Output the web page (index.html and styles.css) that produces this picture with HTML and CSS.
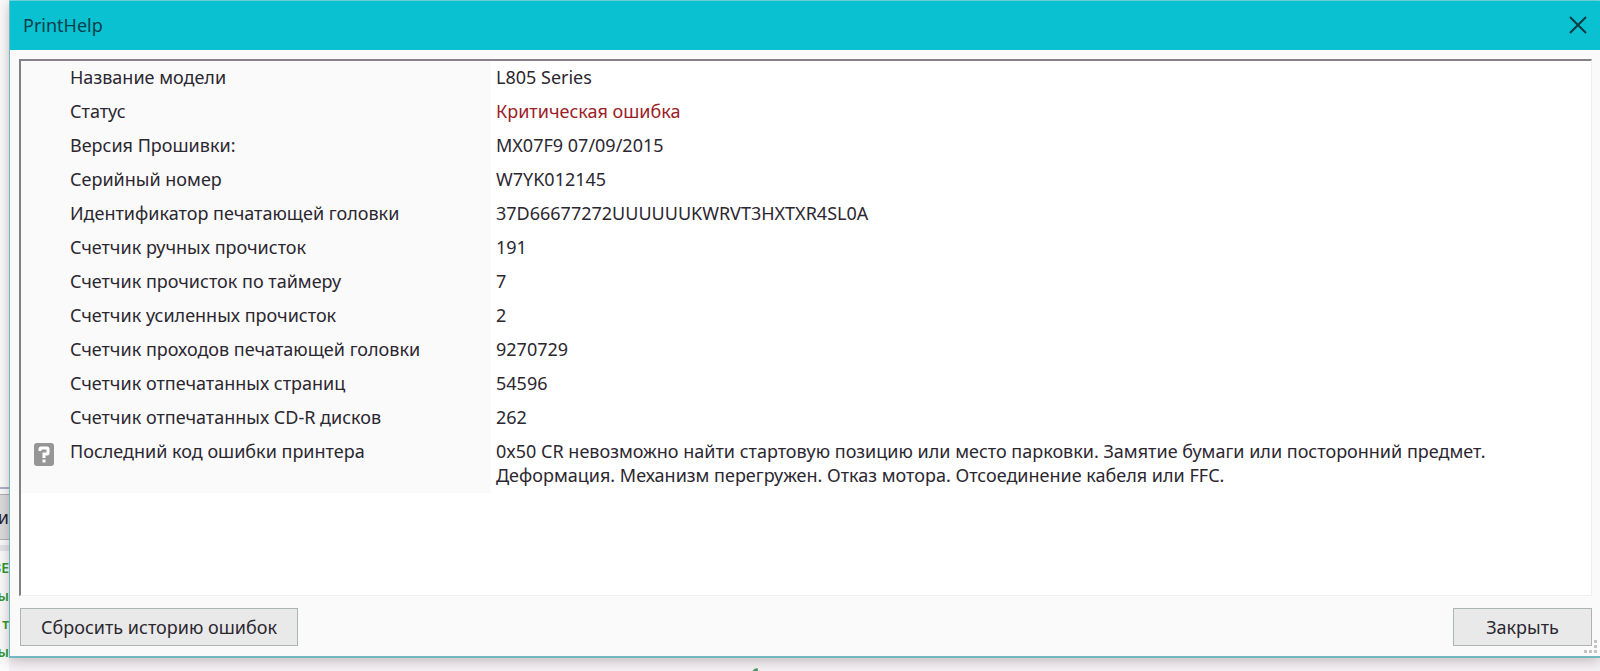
FILE: index.html
```
<!DOCTYPE html>
<html lang="ru">
<head>
<meta charset="utf-8">
<title>PrintHelp</title>
<link rel="stylesheet" href="styles.css">
</head>
<body>
<div class="backdrop" aria-hidden="true">
  <div class="backdrop-lines">
    <div class="backdrop-button">и</div>
    <div class="backdrop-band"></div>
    <p class="log">ВЕ</p>
    <p class="log">ы</p>
    <p class="log">т</p>
    <p class="log">ы</p>
  </div>
  <svg class="backdrop-mark" viewBox="0 0 10 4"><path d="M0 4Q3 0 7 0L8 4Z" fill="#4f9a6c"/></svg>
</div>
<main class="dialog">
  <header class="titlebar">
    <h1 class="title">PrintHelp</h1>
    <button class="close" type="button" aria-label="Закрыть окно">
      <svg viewBox="0 0 18 18" width="18" height="18"><path d="M1 1L17 17M17 1L1 17" stroke="#093b42" stroke-width="2" fill="none"/></svg>
    </button>
  </header>
  <div class="content">
    <div class="panel">
      <table class="info">
        <colgroup><col class="col-icon"><col class="col-label"><col></colgroup>
        <tbody>
          <tr><td></td><th scope="row">Название модели</th><td>L805 Series</td></tr>
          <tr><td></td><th scope="row">Статус</th><td class="critical">Критическая ошибка</td></tr>
          <tr><td></td><th scope="row">Версия Прошивки:</th><td>MX07F9 07/09/2015</td></tr>
          <tr><td></td><th scope="row">Серийный номер</th><td>W7YK012145</td></tr>
          <tr><td></td><th scope="row">Идентификатор печатающей головки</th><td>37D66677272UUUUUUKWRVT3HXTXR4SL0A</td></tr>
          <tr><td></td><th scope="row">Счетчик ручных прочисток</th><td>191</td></tr>
          <tr><td></td><th scope="row">Счетчик прочисток по таймеру</th><td>7</td></tr>
          <tr><td></td><th scope="row">Счетчик усиленных прочисток</th><td>2</td></tr>
          <tr><td></td><th scope="row">Счетчик проходов печатающей головки</th><td>9270729</td></tr>
          <tr><td></td><th scope="row">Счетчик отпечатанных страниц</th><td>54596</td></tr>
          <tr><td></td><th scope="row">Счетчик отпечатанных CD-R дисков</th><td>262</td></tr>
          <tr>
            <td class="icon-cell"><svg class="help" viewBox="0 0 20 23" width="20" height="23"><rect width="20" height="23" rx="3" fill="#969696"/><path d="M6 8V6Q6 5 7 5H13Q14 5 14 6V10Q14 11 13 11H10V15M10 16.500V19.500" stroke="#fff" stroke-width="3" fill="none"/></svg></td>
            <th scope="row">Последний код ошибки принтера</th>
            <td>0x50 CR невозможно найти стартовую позицию или место парковки. Замятие бумаги или посторонний предмет.<br>Деформация. Механизм перегружен. Отказ мотора. Отсоединение кабеля или FFC.</td>
          </tr>
        </tbody>
      </table>
    </div>
    <footer class="actions">
      <button class="button button-reset" type="button">Сбросить историю ошибок</button>
      <button class="button button-close" type="button">Закрыть</button>
    </footer>
  </div>
  <svg class="grip" viewBox="0 0 14 14" width="14" height="14" aria-hidden="true"><path d="M10 1h3v3h-3zM10 6h3v3h-3zM10 11h3v3h-3zM5 11h3v3h-3zM0 11h3v3h-3z" fill="#c4c4c4"/></svg>
</main>
</body>
</html>
```
FILE: styles.css
```
* { box-sizing: border-box; }

body {
  margin: 0;
  min-height: 100vh;
  padding: 1px 0 13px 9px;
  display: flex;
  position: relative;
  overflow: hidden;
  background: #f4f2f4;
  color: #2b2730;
  font: 18px/24px "Noto Sans", "Open Sans", sans-serif;
}

.backdrop {
  position: absolute;
  inset: 0;
  background: linear-gradient(#6fe0e8 0 1px, transparent 1px);
}

.backdrop-lines {
  position: absolute;
  top: 0;
  left: 0;
  width: 9px;
  height: 100%;
  padding-top: 488px;
  overflow: hidden;
  background: linear-gradient(#fbfbfb 0 487px, #a9b4c8 487px 489px, #fbfbfb 489px);
}

.backdrop-button {
  height: 46px;
  margin-top: 6px;
  padding-top: 10px;
  border: solid #b2b2b2;
  border-width: 1px 0;
  background: #dcdcdc;
  color: #23202c;
  display: flex;
  justify-content: flex-end;
}

.backdrop-band { height: 6px; margin: 5px 0 7px; background: #e6e4e6; }

.log {
  margin: 0;
  height: 28px;
  display: flex;
  justify-content: flex-end;
  color: #2f9a2f;
  font-size: 14px;
  font-weight: 600;
  line-height: 20px;
}

.backdrop-mark {
  position: absolute;
  left: 47%;
  bottom: 0;
  width: 8px;
  height: 3px;
}

.dialog {
  flex: 1;
  min-width: 0;
  display: flex;
  flex-direction: column;
  position: relative;
  border: solid #6fb9bf;
  border-width: 0 0 2px 1px;
  background: #fafafa;
  box-shadow: 0 2px 12px rgba(60, 30, 40, 0.3);
}

.titlebar {
  height: 49px;
  padding: 0 13px 2px;
  display: flex;
  align-items: center;
  justify-content: space-between;
  background: #09c1d1;
}

.title { margin: 0; color: #07404a; font-size: 18px; font-weight: 400; }

.close {
  display: flex;
  padding: 0;
  border: 0;
  background: none;
}

.content {
  flex: 1;
  display: flex;
  flex-direction: column;
  padding: 9px 8px 10px 9px;
}

.panel {
  flex: 1;
  border: solid #efefef;
  border-width: 2px 1px 1px 2px;
  border-top-color: #86808a;
  border-left-color: #808080;
  background: #fff;
}

.info {
  width: 100%;
  table-layout: fixed;
  border-collapse: collapse;
}

.col-icon { width: 49px; background: #fafafa; }
.col-label { width: 421px; background: #fafafa; }

.info th,
.info td {
  padding: 4px 0 6px;
  text-align: left;
  vertical-align: top;
  font-weight: 400;
  white-space: nowrap;
}

.info td:last-child { padding-left: 5px; }
.info td:first-child { height: 34px; }
.info .icon-cell { padding: 8px 0 0 13px; }
.info .critical { color: #9b2027; }
.help { display: block; }

.actions {
  display: flex;
  justify-content: space-between;
  padding: 12px 0 0 1px;
}

.button {
  height: 38px;
  padding: 0 14px;
  border: 1px solid #adb5b1;
  background: #e9e9e9;
  color: inherit;
  font: inherit;
}

.button-reset { min-width: 278px; }
.button-close { min-width: 139px; }

.grip { position: absolute; right: 2px; bottom: 3px; }
```
